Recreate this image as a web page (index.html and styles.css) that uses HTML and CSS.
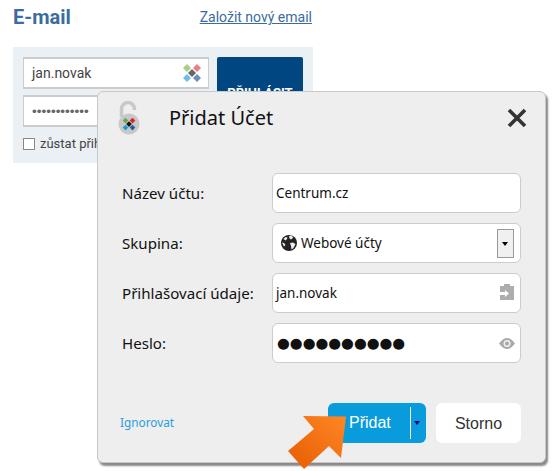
FILE: index.html
```html
<!doctype html>
<html>
    <head>
        <title>E-mail</title>
        <link rel="stylesheet" href="styles.css">
    </head>
    <body>
        <div class="page">
            <header class="top">
                <h1>E-mail</h1>
                <a href="#">Založit nový email</a>
            </header>
            <form class="login">
                <div class="login-row">
                    <div class="login-fields">
                        <div class="login-input">
                            <span>jan.novak</span>
                            <svg class="marks" width="18" height="18" viewBox="0 0 18 18">
                                <path fill="#a9cf82" d="M4 0L8 4 4 8 0 4z"/>
                                <path fill="#ea7d86" d="M14 0L18 4 14 8 10 4z"/>
                                <path fill="#6fbde6" d="M4 10L8 14 4 18 0 14z"/>
                                <path fill="#6f8ebd" d="M14 10L18 14 14 18 10 14z"/>
                                <path fill="#666" d="M9 5L13 9 9 13 5 9z"/>
                            </svg>
                        </div>
                        <div class="login-input small-dots">••••••••••••</div>
                    </div>
                    <button type="button" class="login-btn">PŘIHLÁSIT</button>
                </div>
                <label class="stay"><span class="box"></span>zůstat přihlášen</label>
            </form>
        </div>

        <div class="dialog">
            <div class="dialog-head">
                <svg class="lock" width="24" height="34" viewBox="0 0 24 34">
                    <path fill="none" stroke="#c8c8c8" stroke-width="3.500" d="M4.500 16V8a6.500 6.500 0 0 1 13 0v1"/>
                    <circle cx="12" cy="23" r="10.500" fill="#c8c8c8"/>
                    <path fill="#e02030" d="M15.500 16.800l2.800 2.800-2.800 2.800-2.800-2.800z"/>
                    <path fill="#6aa84f" d="M8.500 16.800l2.800 2.800-2.800 2.800-2.800-2.800z"/>
                    <path fill="#1b9ad6" d="M8.500 23.800l2.800 2.800-2.800 2.800-2.800-2.800z"/>
                    <path fill="#1d5ea8" d="M15.500 23.800l2.800 2.800-2.800 2.800-2.800-2.800z"/>
                    <path fill="#111" d="M12 20.300l2.800 2.800-2.800 2.800-2.800-2.800z"/>
                </svg>
                <h2>Přidat Účet</h2>
                <svg class="close" width="20" height="20" viewBox="0 0 20 20">
                    <path fill="none" stroke="#333" stroke-width="3.600" d="M2 2l16 16M18 2L2 18"/>
                </svg>
            </div>
            <div class="dialog-form">
                <div class="row">
                    <label>Název účtu:</label>
                    <div class="field">Centrum.cz</div>
                </div>
                <div class="row">
                    <label>Skupina:</label>
                    <div class="field">
                        <svg class="globe" width="16" height="16" viewBox="0 0 16 16">
                            <circle cx="8" cy="8" r="8" fill="#222"/>
                            <path fill="#eee" d="M2.500 4l2-2 2 .5L6 4 4.500 5.500zM8 1l3-.5 1 2.500-2 1.500-1.500-1zM9 8l3-.5 2.500 1.500-2 4-2 1.500-.5-3.500zM1 7.500l2 .5 1.500 2L3 11.500z"/>
                        </svg>
                        <span>Webové účty</span>
                        <span class="drop"></span>
                    </div>
                </div>
                <div class="row">
                    <label>Přihlašovací údaje:</label>
                    <div class="field">
                        <span>jan.novak</span>
                        <svg class="field-icon clip" width="14" height="16" viewBox="0 0 14 16">
                            <path fill="#adadad" d="M0 2h4V0h6v2h4v14H0z"/>
                            <path fill="#fff" d="M0 8h5V6l4 3.500L5 13v-2H0z"/>
                        </svg>
                    </div>
                </div>
                <div class="row">
                    <label>Heslo:</label>
                    <div class="field">
                        <span class="big-dots">●●●●●●●●●●</span>
                        <svg class="field-icon" width="16" height="11" viewBox="0 0 16 11">
                            <path fill="#aaa" d="M0 5.500C3 1.500 5.500 0 8 0s5 1.500 8 5.500C13 9.500 10.500 11 8 11S3 9.500 0 5.500z"/>
                            <circle cx="8" cy="5.500" r="3.500" fill="#eee"/>
                            <circle cx="8" cy="5.500" r="2" fill="#aaa"/>
                        </svg>
                    </div>
                </div>
            </div>
            <div class="dialog-foot">
                <a href="#">Ignorovat</a>
                <div class="actions">
                    <button type="button" class="add"><span class="add-label">Přidat</span><span class="add-split"></span><span class="add-caret"></span></button>
                    <button type="button" class="cancel">Storno</button>
                </div>
            </div>
        </div>

        <svg class="arrow" width="70" height="65" viewBox="0 0 70 65">
            <defs>
                <linearGradient id="orange" x1="0" y1="1" x2="1" y2="0">
                    <stop offset="0" stop-color="#e65c00"/>
                    <stop offset="1" stop-color="#ff8726"/>
                </linearGradient>
            </defs>
            <path fill="url(#orange)" d="M62 6.500L19 6 30 19 4 41 20 59 45 36 57 48z"/>
        </svg>
    </body>
</html>
```

FILE: styles.css
```css
* {
    box-sizing: border-box;
}
html,
body {
    margin: 0;
    padding: 0;
    height: 100%;
    overflow: hidden;
    background-color: #fff;
}
.page {
    width: 313px;
    padding: 0 0 0 13px;
    font-family: Roboto, sans-serif;
}
.top {
    height: 47px;
    display: flex;
    justify-content: space-between;
    align-items: flex-start;
}
.top h1 {
    margin: 4px 0 0 0;
    font-size: 20px;
    line-height: 27px;
    font-weight: 700;
    color: #3a6c9f;
}
.top a {
    margin-top: 8px;
    margin-right: 1px;
    font-size: 14px;
    line-height: 18px;
    color: #3a6c9f;
}
.login {
    height: 116px;
    padding: 10px;
    background-color: #ebf0f5;
}
.login-row {
    display: flex;
    gap: 8px;
}
.login-fields {
    display: flex;
    flex-direction: column;
    gap: 6px;
    width: 186px;
}
.login-input {
    height: 32px;
    padding: 0 7px 0 8px;
    display: flex;
    align-items: center;
    justify-content: space-between;
    background-color: #fff;
    border: 1px solid #ccc;
    border-width: 2px 1px;
    font-size: 14px;
    color: #444;
}
.small-dots {
    font-family: "Liberation Sans", sans-serif;
    font-size: 13.500px;
    color: #666;
    justify-content: flex-start;
}
.login-btn {
    width: 86px;
    height: 70px;
    padding: 0;
    border: 0;
    border-radius: 2px;
    background-color: #004680;
    color: #fff;
    font-family: Roboto, sans-serif;
    font-size: 13px;
    font-weight: 700;
}
.stay {
    margin-top: 10px;
    display: flex;
    align-items: center;
    gap: 5px;
    font-size: 13px;
    line-height: 14px;
    color: #444;
}
.box {
    width: 12px;
    height: 12px;
    background-color: #fff;
    border: 1px solid #888;
}

.dialog {
    position: absolute;
    left: 97px;
    top: 91px;
    width: 449px;
    height: 372px;
    padding: 0 24px 19px 24px;
    display: flex;
    flex-direction: column;
    background-color: #eee;
    border: 1px solid #c8c8c8;
    border-radius: 6px;
    box-shadow: 2px 3px 2px #888;
    font-family: "Noto Sans", sans-serif;
    color: #111;
}
.dialog-head {
    height: 81px;
    display: flex;
    align-items: center;
    padding-bottom: 29px;
}
.lock {
    margin-left: -5px;
    margin-right: 28px;
}
.dialog-head h2 {
    margin: 0;
    flex: 1;
    font-size: 20px;
    font-weight: 400;
    line-height: 26px;
}
.close {
    margin-right: -6px;
}
.dialog-form {
    display: flex;
    flex-direction: column;
    gap: 10px;
}
.row {
    display: flex;
    align-items: center;
    height: 40px;
}
.row label {
    width: 150px;
    margin-top: -1px;
    font-size: 15.100px;
}
.field {
    flex: 1;
    height: 40px;
    padding: 0 5px 0 3px;
    display: flex;
    align-items: center;
    gap: 4px;
    background-color: #fff;
    border: 1px solid #ccc;
    border-radius: 6px;
    font-size: 13.500px;
}
.globe {
    margin-left: 5px;
}
.field-icon {
    margin-left: auto;
    flex-shrink: 0;
}
.clip {
    margin-right: 1px;
    margin-top: -2px;
}
.big-dots {
    font-family: "DejaVu Sans", sans-serif;
    font-size: 14.700px;
    line-height: 20px;
    margin-left: 1px;
}
.drop {
    position: relative;
    width: 17px;
    height: 29px;
    margin-left: auto;
    margin-right: 1px;
    background-color: #f0f0f0;
    border: 1px solid #999;
}
.drop::after {
    content: "";
    position: absolute;
    left: 4px;
    top: 12px;
    border: 3.500px solid transparent;
    border-top: 4px solid #000;
    border-bottom: 0;
}
.dialog-foot {
    margin-top: auto;
    display: flex;
    justify-content: space-between;
    align-items: center;
}
.dialog-foot a {
    margin-top: -3px;
    margin-left: -2px;
    font-size: 11.800px;
    color: #2a9ddb;
    text-decoration: none;
}
.actions {
    display: flex;
    gap: 10px;
}
.actions button {
    height: 40px;
    padding: 0 0 0 0;
    border: 0;
    border-radius: 6px;
    font-family: "Liberation Sans", sans-serif;
    font-size: 16px;
    line-height: 42px;
}
.add {
    width: 98px;
    display: flex;
    align-items: center;
    background-color: #089cdc;
    color: #fff;
}
.add-label {
    margin-left: 21px;
    width: 61px;
    text-align: left;
}
.add-split {
    width: 1px;
    height: 32px;
    background-color: #fff;
}
.add-caret {
    margin-left: 3px;
    border: 3.500px solid transparent;
    border-top: 4px solid #00008b;
    border-bottom: 0;
}
.cancel {
    width: 85px;
    background-color: #fff;
    color: #333;
}
.arrow {
    position: absolute;
    left: 284px;
    top: 410px;
}
```
